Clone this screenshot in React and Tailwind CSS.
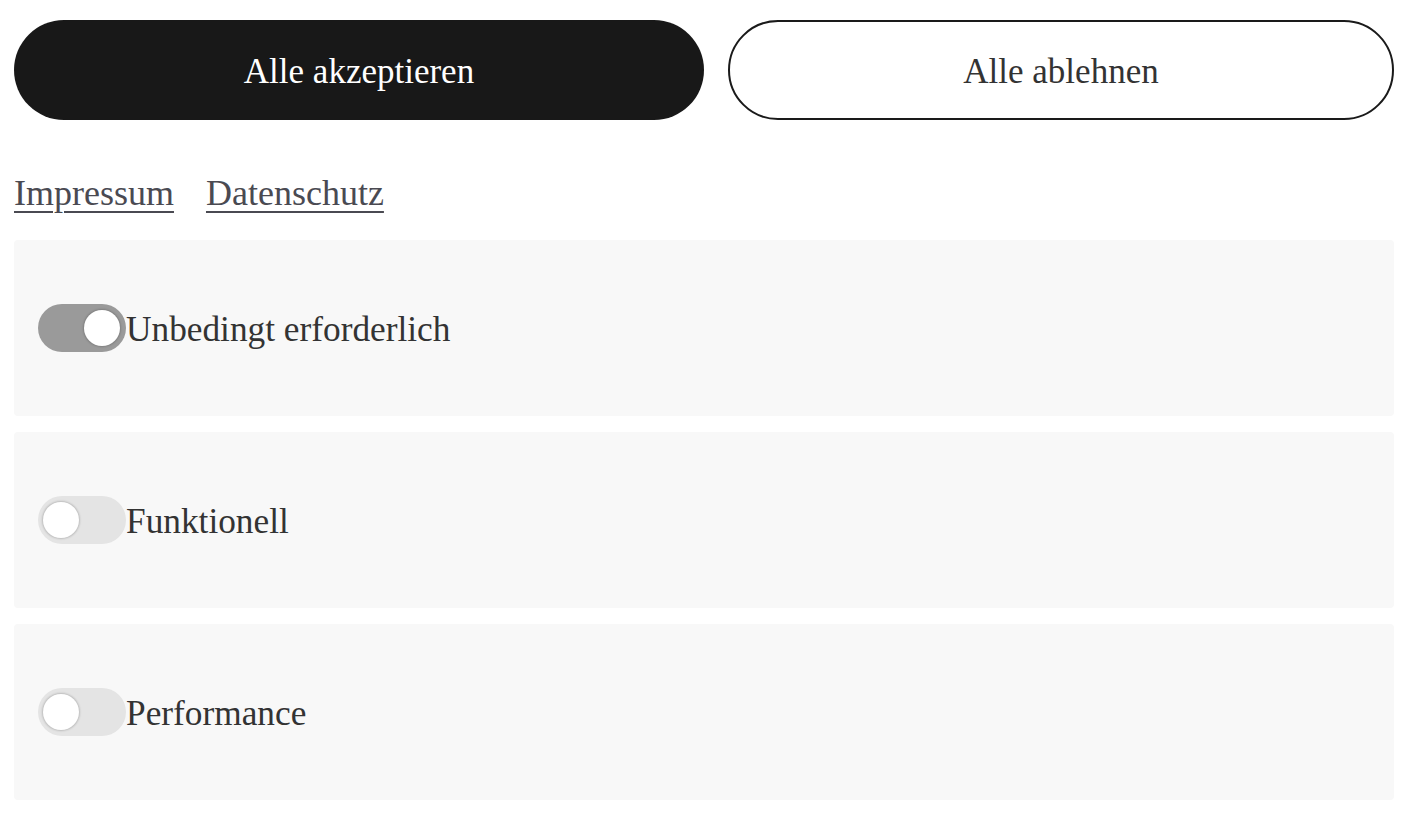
import React, { useState } from 'react'

const serif = "font-['Liberation_Serif',serif]"

const Toggle = ({ on, disabled, onChange }) => (
  <button
    type="button"
    disabled={disabled}
    onClick={onChange}
    className={`relative w-[88px] h-[48px] shrink-0 rounded-full ${
      on ? 'bg-[#9a9a9a]' : 'bg-[#e4e4e4]'
    }`}
  >
    <span
      className={`absolute top-[6px] w-[36px] h-[36px] rounded-full bg-white shadow-[0_0_2px_1px_rgba(0,0,0,0.18)] ${
        on ? 'left-[46px]' : 'left-[5px]'
      }`}
    />
  </button>
)

const Category = ({ label, on, disabled, onChange }) => (
  <div className="h-[176px] rounded-[4px] bg-[#f8f8f8] pl-[24px] flex items-center">
    <Toggle on={on} disabled={disabled} onChange={onChange} />
    <span className="pt-[4px] text-[35.3px] leading-[48px] text-[#333333]">{label}</span>
  </div>
)

export default function App() {
  const [funktionell, setFunktionell] = useState(false)
  const [performance, setPerformance] = useState(false)

  return (
    <div className={`${serif} bg-white min-h-[824px] pl-[14px] pt-[20px]`}>
      <div className="w-[1380px]">
        {/* Buttons */}
        <div className="flex gap-[24px]">
          <button className="w-[690px] h-[100px] pt-[4px] rounded-full bg-[#181818] text-white text-[35px] flex items-center justify-center">
            Alle akzeptieren
          </button>
          <button className="flex-1 h-[100px] pt-[4px] rounded-full border-2 border-[#1a1a1a] text-[#333333] text-[35px] flex items-center justify-center">
            Alle ablehnen
          </button>
        </div>

        {/* Links */}
        <div className="mt-[49px] flex gap-[32px] text-[36px] leading-[48px] text-[#4a4a52]">
          <a href="#" className="underline underline-offset-[6px] decoration-2">
            Impressum
          </a>
          <a href="#" className="underline underline-offset-[6px] decoration-2">
            Datenschutz
          </a>
        </div>

        {/* Categories */}
        <div className="mt-[23px] flex flex-col gap-[16px]">
          <Category label="Unbedingt erforderlich" on disabled />
          <Category
            label="Funktionell"
            on={funktionell}
            onChange={() => setFunktionell(!funktionell)}
          />
          <Category
            label="Performance"
            on={performance}
            onChange={() => setPerformance(!performance)}
          />
        </div>
      </div>
    </div>
  )
}
